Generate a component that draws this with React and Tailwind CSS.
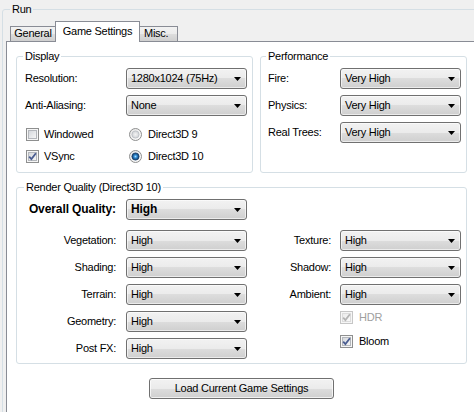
import React from 'react';

const comboBox =
  'flex h-[21px] w-[121px] shrink-0 items-center rounded-[3px] border border-[#707070] bg-[linear-gradient(to_bottom,#f2f2f2_0%,#ebebeb_50%,#dddddd_50%,#cfcfcf_100%)] pl-[4px] pr-[5px] shadow-[inset_0_0_0_1px_rgba(255,255,255,0.6)]';

function Arrow() {
  return (
    <svg width="7" height="4" viewBox="0 0 7 4" className="ml-auto shrink-0">
      <polygon points="0,0 7,0 3.5,4" fill="#000" />
    </svg>
  );
}

function Combo({ value, bold }) {
  return (
    <div className={comboBox}>
      <span className={bold ? 'text-[12px] font-bold tracking-[-0.1px]' : ''}>{value}</span>
      <Arrow />
    </div>
  );
}

function CheckBox({ checked, disabled, id }) {
  return (
    <svg width="13" height="13" viewBox="0 0 13 13" className="shrink-0">
      <defs>
        <linearGradient id={id} x1="0" y1="0" x2="1" y2="1">
          <stop offset="0" stopColor={disabled ? '#ebebeb' : '#d3d6db'} />
          <stop offset="1" stopColor={disabled ? '#fafafa' : '#f8f8f8'} />
        </linearGradient>
      </defs>
      <rect x="0.5" y="0.5" width="12" height="12" fill="#f6f6f6" stroke={disabled ? '#c6c6c6' : '#8e8f8f'} />
      <rect x="2.5" y="2.5" width="8" height="8" fill={`url(#${id})`} stroke={disabled ? '#dcdcdc' : '#b4b7bc'} />
      {checked && (
        <path
          d="M3.2 6.6 L5.4 9 L9.9 3.3"
          fill="none"
          stroke={disabled ? '#b4b4b4' : '#4a5d91'}
          strokeWidth="1.8"
        />
      )}
    </svg>
  );
}

function Radio({ checked, id }) {
  return (
    <svg width="13" height="13" viewBox="0 0 13 13" className="shrink-0">
      <defs>
        <linearGradient id={`${id}o`} x1="0" y1="0" x2="1" y2="1">
          <stop offset="0" stopColor="#e4e4e4" />
          <stop offset="1" stopColor="#ffffff" />
        </linearGradient>
        <radialGradient id={`${id}i`} cx="0.5" cy="0.5" r="0.5">
          {checked ? (
            <>
              <stop offset="0" stopColor="#a9dcff" />
              <stop offset="0.45" stopColor="#2a86cf" />
              <stop offset="1" stopColor="#12365f" />
            </>
          ) : (
            <>
              <stop offset="0" stopColor="#f4f4f4" />
              <stop offset="1" stopColor="#cfd2d6" />
            </>
          )}
        </radialGradient>
      </defs>
      <circle cx="6.5" cy="6.5" r="6" fill={`url(#${id}o)`} stroke="#8e8f8f" />
      <circle cx="6.5" cy="6.5" r="3.6" fill={`url(#${id}i)`} stroke={checked ? '#1a3f6b' : '#b9bcc1'} strokeWidth="0.8" />
    </svg>
  );
}

function Legend({ children, className }) {
  return <div className={`-mt-[7px] w-fit px-[2px] ${className}`}>{children}</div>;
}

function Row({ label, labelClass, value, bold }) {
  return (
    <div className="flex h-[21px] items-center">
      <div className={labelClass}>{label}</div>
      <Combo value={value} bold={bold} />
    </div>
  );
}

export default function App() {
  return (
    <div className="h-[412px] w-[474px] overflow-hidden bg-[#f0f0f0] pl-[2px] pt-[9px] font-['Liberation_Sans',Arial,sans-serif] text-[11px] leading-[13px] tracking-[-0.25px] text-black">
      {/* Run group */}
      <div className="h-[460px] w-[520px] rounded-[3px] border border-[#d5dfe5] pl-[3px]">
        <Legend className="ml-[4px] bg-[#f0f0f0]">Run</Legend>

        {/* tabs */}
        <div className="mt-[5px] flex items-end pl-[4px]">
          <div className="flex h-[15px] w-[46px] justify-center border-l border-r border-t border-[#898c95] bg-[linear-gradient(to_bottom,#f2f2f2_0%,#ebebeb_50%,#dddddd_50%,#cfcfcf_100%)]">
            General
          </div>
          <div className="relative z-10 -mb-[1px] -ml-[1px] flex h-[21px] w-[85px] justify-center border-l border-r border-t border-[#898c95] bg-white pt-[3px]">
            Game Settings
          </div>
          <div className="-ml-[1px] flex h-[15px] w-[39px] border-l border-r border-t border-[#898c95] bg-[linear-gradient(to_bottom,#f2f2f2_0%,#ebebeb_50%,#dddddd_50%,#cfcfcf_100%)] pl-[4px]">
            Misc.
          </div>
        </div>

        {/* tab page */}
        <div className="h-[420px] border-l border-t border-[#898c95] bg-white pl-[9px] pt-[14px]">
          <div className="flex">
            {/* Display */}
            <div className="flex h-[117px] w-[237px] flex-col rounded-[3px] border border-[#d5dfe5]">
              <Legend className="ml-[6px] bg-white">Display</Legend>
              <div className="mt-[5px] flex flex-col gap-[6px] pl-[8px]">
                <Row label="Resolution:" labelClass="w-[101px]" value="1280x1024 (75Hz)" />
                <Row label="Anti-Aliasing:" labelClass="w-[101px]" value="None" />
              </div>
              <div className="mt-[12px] flex flex-col gap-[9px] pl-[9px]">
                <div className="flex h-[13px] items-center">
                  <div className="flex w-[100px] items-center gap-[5px]">
                    <CheckBox id="cbWin" />
                    <span>Windowed</span>
                  </div>
                  <div className="ml-[3px] flex items-center gap-[6px]">
                    <Radio id="rd9" />
                    <span>Direct3D 9</span>
                  </div>
                </div>
                <div className="flex h-[13px] items-center">
                  <div className="flex w-[100px] items-center gap-[5px]">
                    <CheckBox id="cbVs" checked />
                    <span>VSync</span>
                  </div>
                  <div className="ml-[3px] flex items-center gap-[6px]">
                    <Radio id="rd10" checked />
                    <span>Direct3D 10</span>
                  </div>
                </div>
              </div>
            </div>

            {/* Performance */}
            <div className="ml-[7px] flex h-[117px] w-[207px] flex-col rounded-[3px] border border-[#d5dfe5]">
              <Legend className="ml-[5px] bg-white">Performance</Legend>
              <div className="mt-[5px] flex flex-col gap-[6px] pl-[7px]">
                <Row label="Fire:" labelClass="w-[72px]" value="Very High" />
                <Row label="Physics:" labelClass="w-[72px]" value="Very High" />
                <Row label="Real Trees:" labelClass="w-[72px]" value="Very High" />
              </div>
            </div>
          </div>

          {/* Render Quality */}
          <div className="mt-[14px] flex h-[177px] w-[451px] flex-col rounded-[3px] border border-[#d5dfe5]">
            <Legend className="ml-[7px] bg-white">Render Quality (Direct3D 10)</Legend>
            <div className="mt-[5px]">
              <Row
                label="Overall Quality:"
                labelClass="mr-[10px] w-[99px] text-right text-[12px] font-bold tracking-[-0.1px]"
                value="High"
                bold
              />
            </div>
            <div className="mt-[10px] flex">
              <div className="flex w-[230px] flex-col gap-[6px]">
                <Row label="Vegetation:" labelClass="mr-[10px] w-[99px] text-right" value="High" />
                <Row label="Shading:" labelClass="mr-[10px] w-[99px] text-right" value="High" />
                <Row label="Terrain:" labelClass="mr-[10px] w-[99px] text-right" value="High" />
                <Row label="Geometry:" labelClass="mr-[10px] w-[99px] text-right" value="High" />
                <Row label="Post FX:" labelClass="mr-[10px] w-[99px] text-right" value="High" />
              </div>
              <div className="flex flex-col">
                <div className="flex flex-col gap-[6px]">
                  <Row label="Texture:" labelClass="mr-[9px] w-[84px] text-right" value="High" />
                  <Row label="Shadow:" labelClass="mr-[9px] w-[84px] text-right" value="High" />
                  <Row label="Ambient:" labelClass="mr-[9px] w-[84px] text-right" value="High" />
                </div>
                <div className="mt-[6px] flex h-[13px] items-center gap-[6px] pl-[93px] text-[#a0a0a0]">
                  <CheckBox id="cbHdr" checked disabled />
                  <span>HDR</span>
                </div>
                <div className="mt-[11px] flex h-[13px] items-center gap-[6px] pl-[93px]">
                  <CheckBox id="cbBloom" checked />
                  <span>Bloom</span>
                </div>
              </div>
            </div>
          </div>

          <div className="mt-[14px] flex w-[451px] justify-center">
            <button
              type="button"
              className="h-[21px] w-[185px] rounded-[3px] border border-[#707070] bg-[linear-gradient(to_bottom,#f2f2f2_0%,#ebebeb_50%,#dddddd_50%,#cfcfcf_100%)] shadow-[inset_0_0_0_1px_rgba(255,255,255,0.7)]"
            >
              Load Current Game Settings
            </button>
          </div>
        </div>
      </div>
    </div>
  );
}
